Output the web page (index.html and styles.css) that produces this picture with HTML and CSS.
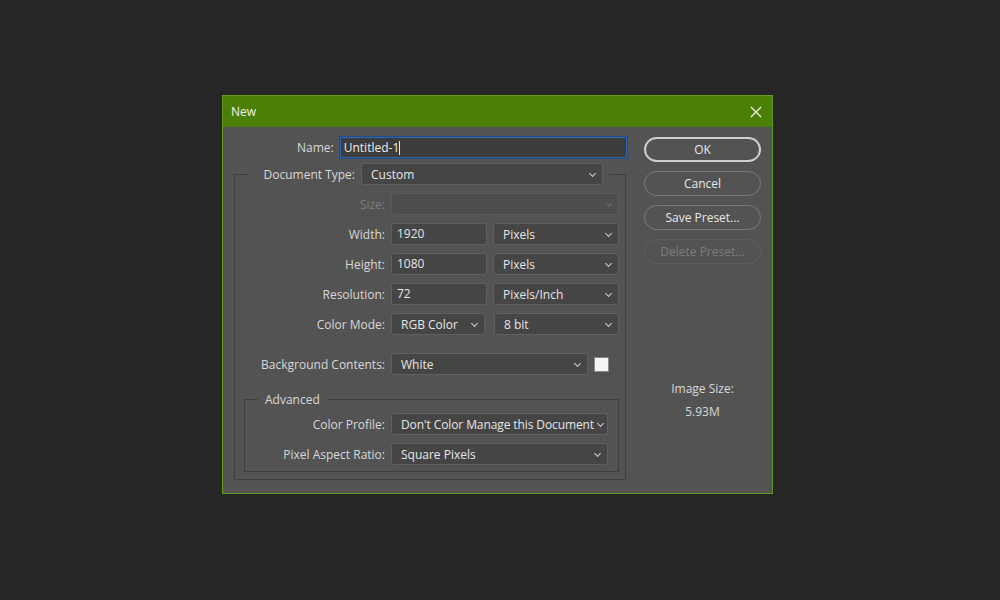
FILE: index.html
```html
<!DOCTYPE html>
<html lang="en">
<head>
    <meta charset="UTF-8">
    <title>New</title>
    <link rel="stylesheet" href="styles.css">
</head>
<body>
    <div class="dialog">
        <div class="title-bar">
            <span class="title">New</span>
            <svg class="close" width="12" height="12" viewBox="0 0 12 12">
                <path d="M1 1 L11 11 M11 1 L1 11" stroke="#f2f2f2" stroke-width="1.2" fill="none"/>
            </svg>
        </div>

        <div class="dialog-body">
            <div class="main-col">
                <div class="name-row">
                    <label class="name-label">Name:</label>
                    <div class="name-input">Untitled-1<span class="caret"></span></div>
                </div>

                <fieldset class="group">
                    <legend class="doc-legend">
                        <span class="doc-label">Document Type:</span>
                        <div class="select doc-select">Custom</div>
                    </legend>

                    <div class="form-row">
                        <label class="disabled-text">Size:</label>
                        <div class="select disabled"></div>
                    </div>
                    <div class="form-row">
                        <label>Width:</label>
                        <div class="pair">
                            <div class="text-input">1920</div>
                            <div class="select">Pixels</div>
                        </div>
                    </div>
                    <div class="form-row">
                        <label>Height:</label>
                        <div class="pair">
                            <div class="text-input">1080</div>
                            <div class="select">Pixels</div>
                        </div>
                    </div>
                    <div class="form-row">
                        <label>Resolution:</label>
                        <div class="pair">
                            <div class="text-input">72</div>
                            <div class="select">Pixels/Inch</div>
                        </div>
                    </div>
                    <div class="form-row">
                        <label>Color Mode:</label>
                        <div class="pair mode-pair">
                            <div class="select mode-select">RGB Color</div>
                            <div class="select">8 bit</div>
                        </div>
                    </div>
                    <div class="form-row bg-row">
                        <label>Background Contents:</label>
                        <div class="pair">
                            <div class="select bg-select">White</div>
                            <div class="swatch"></div>
                        </div>
                    </div>

                    <fieldset class="group advanced">
                        <legend class="adv-legend">Advanced</legend>
                        <div class="form-row inner">
                            <label>Color Profile:</label>
                            <div class="select tight">Don't Color Manage this Document</div>
                        </div>
                        <div class="form-row inner">
                            <label>Pixel Aspect Ratio:</label>
                            <div class="select">Square Pixels</div>
                        </div>
                    </fieldset>
                </fieldset>
            </div>

            <div class="side-col">
                <button class="btn btn-default">OK</button>
                <button class="btn">Cancel</button>
                <button class="btn">Save Preset...</button>
                <button class="btn btn-disabled">Delete Preset...</button>

                <div class="image-size">
                    <div>Image Size:</div>
                    <div class="size-value">5.93M</div>
                </div>
            </div>
        </div>
    </div>
</body>
</html>
```

FILE: styles.css
```css
body {
    margin: 0;
    background-color: #262626;
    font-family: "Open Sans", "Noto Sans", sans-serif;
    font-size: 12px;
    color: #d8d8d8;
}
.dialog {
    width: 549px;
    margin: 95px 0 0 222px;
    background-color: #535353;
    border: 1px solid #5f9a20;
}
.title-bar {
    height: 31px;
    background-color: #4b7f08;
    display: flex;
    align-items: center;
    justify-content: space-between;
    padding: 0 10px 0 8px;
}
.title {
    color: #f0f0f0;
    font-size: 12px;
}
.close {
    display: block;
}
.dialog-body {
    display: flex;
    padding: 10px 0 13px 0;
}
.main-col {
    width: 404px;
}
.name-row {
    display: flex;
    align-items: center;
    gap: 6px;
}
.name-label {
    width: 111px;
    text-align: right;
}
.name-input {
    width: 283px;
    height: 19px;
    line-height: 19px;
    padding: 0 0 0 3px;
    background-color: #3c3c3c;
    border: 1px solid #2b67b0;
    box-shadow: 0 0 0 1px #234d80;
    color: #ececec;
}
.caret {
    display: inline-block;
    width: 1px;
    height: 14px;
    background-color: #e8e8e8;
    vertical-align: -3px;
}
.group {
    margin: 5px 0 0 11px;
    padding: 8px 6px 7px 9px;
    width: 375px;
    border: 1px solid #3f3f3f;
    min-width: 0;
}
.doc-legend {
    margin-left: 5px;
    padding: 0 6px 0 14px;
    display: flex;
    align-items: center;
    gap: 6px;
}
.doc-label {
    width: 92px;
    text-align: right;
}
.doc-select {
    width: 242px;
    flex: none;
}
.select {
    box-sizing: border-box;
    height: 22px;
    line-height: 21px;
    padding: 0 18px 0 9px;
    background-color: #454545;
    border: 1px solid #5f5f5f;
    border-radius: 3px;
    color: #e6e6e6;
    white-space: nowrap;
    overflow: hidden;
    position: relative;
    flex: 1;
}
.select::after {
    content: "";
    position: absolute;
    right: 7px;
    top: 7px;
    width: 4px;
    height: 4px;
    border-right: 1px solid #cfcfcf;
    border-bottom: 1px solid #cfcfcf;
    transform: rotate(45deg);
}
.select.tight {
    padding-right: 10px;
    letter-spacing: -0.1px;
}
.select.tight::after {
    right: 4px;
}
.select.disabled {
    background-color: #4e4e4e;
    border-color: #5a5a5a;
}
.select.disabled::after {
    border-color: #6c6c6c;
}
.form-row {
    display: grid;
    grid-template-columns: 141px 1fr;
    column-gap: 6px;
    align-items: center;
    margin-bottom: 8px;
}
.form-row label {
    text-align: right;
}
.disabled-text {
    color: #7c7c7c;
}
.pair {
    display: flex;
    gap: 6px;
    align-items: center;
}
.text-input {
    box-sizing: border-box;
    width: 96px;
    height: 22px;
    line-height: 19px;
    padding: 0 5px;
    background-color: #454545;
    border: 1px solid #5f5f5f;
    border-radius: 2px;
    color: #e6e6e6;
}
.mode-pair {
    gap: 9px;
}
.mode-select {
    flex: 0 0 94px;
}
.bg-row {
    margin-top: 18px;
    margin-bottom: 16px;
}
.bg-select {
    flex: 0 0 197px;
}
.swatch {
    width: 13px;
    height: 13px;
    background-color: #f4f4f4;
    border: 1px solid #8a8a8a;
}
.advanced {
    margin: 0;
    padding: 5px 10px 6px 0;
    width: auto;
}
.adv-legend {
    margin-left: 13px;
    padding: 0 7px;
    color: #d8d8d8;
}
.form-row.inner {
    grid-template-columns: 140px 1fr;
}
.form-row.inner:last-child {
    margin-bottom: 0;
}
.side-col {
    margin-left: 17px;
    width: 117px;
    display: flex;
    flex-direction: column;
    gap: 9px;
}
.btn {
    height: 25px;
    font-family: inherit;
    font-size: 12px;
    color: #e8e8e8;
    background-color: transparent;
    border: 1px solid #7a7a7a;
    border-radius: 13px;
}
.btn-default {
    border: 2px solid #cfcfcf;
}
.btn-disabled {
    color: #7c7c7c;
    border-color: #5e5e5e;
}
.image-size {
    margin-top: 104px;
    text-align: center;
    line-height: 23px;
}
```
